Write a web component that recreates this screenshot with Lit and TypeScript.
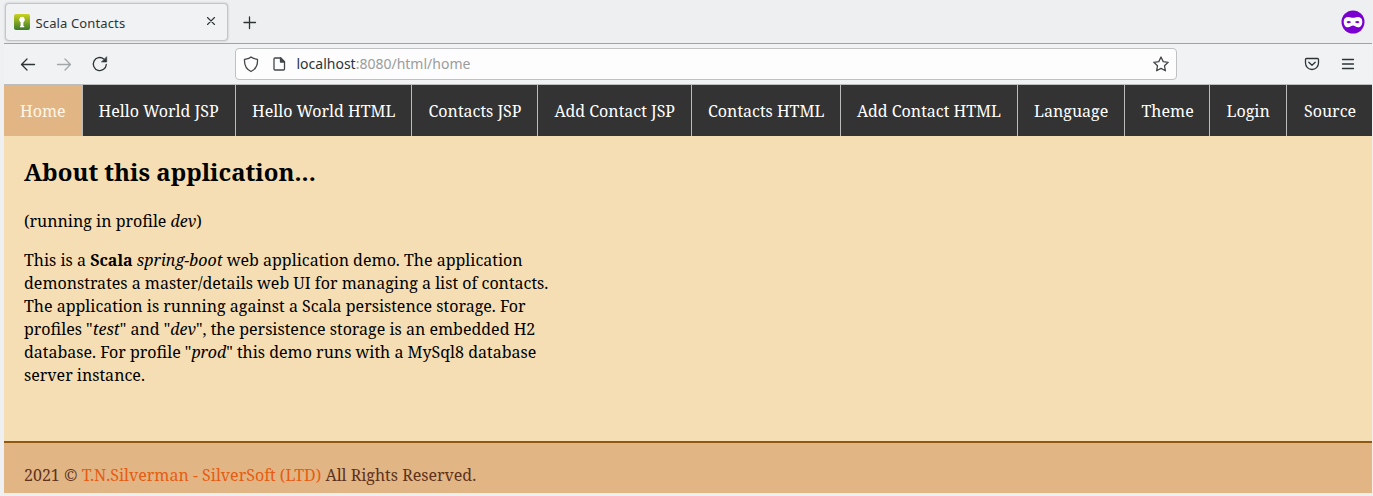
import { LitElement, html, css } from "lit";
import { customElement } from "lit/decorators.js";

const NAV: [string, number][] = [
  ["Home", 79],
  ["Hello World JSP", 153],
  ["Hello World HTML", 176],
  ["Contacts JSP", 126],
  ["Add Contact JSP", 154],
  ["Contacts HTML", 149],
  ["Add Contact HTML", 177],
  ["Language", 107],
  ["Theme", 85],
  ["Login", 77],
  ["Source", 85],
];

@customElement("browser-chrome")
class BrowserChrome extends LitElement {
  static styles = css`
    :host { display: block; font-family: "Noto Sans", sans-serif; color: #2e3436; }
    * { box-sizing: border-box; }
    svg { display: block; flex: none; overflow: visible; fill: none; stroke: #2e3436; stroke-width: 1.3; stroke-linecap: round; stroke-linejoin: round; }
    .tabs { height: 44px; display: flex; align-items: flex-start; padding: 3px 7px 0 1px; background: #eeeff1; border-bottom: 1px solid #a0a3a2; }
    .tab { width: 223px; height: 38px; display: flex; align-items: center; padding: 0 11px 0 8px; background: #f1f2f4; border: 1px solid #c3c5c6; border-radius: 4px; box-shadow: 0 0 2px #b0b2b4; font-size: 13px; }
    .tab .close { stroke-width: 1.1; margin-bottom: 2px; }
    .title { flex: 1; padding: 2px 0 0 5.500px; letter-spacing: .13px; white-space: nowrap; }
    .plus { margin: 14px 0 0 16px; }
    .mask { margin: 7px 0 0 auto; }
    .bar { height: 41px; display: flex; align-items: center; background: #f1f2f4; border-bottom: 1px solid #bcbebe; padding: 0 16px; }
    .dim { opacity: .4; }
    .nav-gap { margin-left: 20px; }
    .url { flex: none; width: 942px; height: 32px; margin-left: 127px; display: flex; align-items: center; background: #fdfdfd; border: 1px solid #bfc1c3; border-radius: 4px; padding: 0 7px; font-size: 14px; white-space: nowrap; }
    .url svg { stroke: #43474a; }
    .page-icon { margin-left: 12px; }
    .address { flex: 1; padding: 0 0 2px 9.500px; color: #9a9c9e; }
    .address b { font-weight: 400; color: #2e3436; }
    .pocket { margin-left: 127px; }
  `;
  render() {
    return html`
      <div class="tabs">
        <div class="tab">
          <svg width="16" height="16" viewBox="0 0 16 16">
            <defs><linearGradient id="g" x1="0" y1="0" x2="0" y2="1"><stop offset="0" stop-color="#cbd321"/><stop offset="1" stop-color="#38792b"/></linearGradient></defs>
            <rect width="16" height="16" rx="2" style="fill:url(#g);stroke:none"/>
            <path d="M8 2.800a2.900 2.900 0 0 0-1.400 5.400V12H6v1.200h4.200V12h-.8V8.200A2.900 2.900 0 0 0 8 2.800z" style="fill:#fff;stroke:none"/>
          </svg>
          <span class="title">Scala Contacts</span>
          <svg class="close" width="10" height="10" viewBox="0 0 10 10"><path d="M1.500 1.500L8.500 8.500M8.500 1.500L1.500 8.500"/></svg>
        </div>
        <svg class="plus" width="12" height="12" viewBox="0 0 12 12"><path d="M5.500 0v11.500M0 5.500h11.500"/></svg>
        <svg class="mask" width="24" height="24" viewBox="0 0 24 24">
          <circle cx="12" cy="12" r="11.500" style="fill:#7a00d0;stroke:none"/>
          <path fill-rule="evenodd" style="fill:#fff;stroke:none" d="M7.300 6.900c2.200 0 3.200.9 4.700.9s2.500-.9 4.700-.9c2.900 0 4.600 1.700 4.600 4.500 0 3.500-1.600 5.800-4.200 5.800-2.400 0-3.600-1.700-5.100-1.700s-2.700 1.700-5.100 1.700c-2.600 0-4.200-2.300-4.200-5.800 0-2.800 1.700-4.500 4.600-4.500zM5.500 12c1 1.600 3.500 1.700 4.600.1-1.300-1.500-3.400-1.600-4.600-.1zM13.900 12.100c1.100 1.600 3.600 1.500 4.600-.1-1.200-1.500-3.300-1.400-4.600.1z"/>
        </svg>
      </div>
      <div class="bar">
        <svg width="16" height="16" viewBox="0 0 16 16"><path d="M14.500 8.500H1.500M7 3L1.500 8.500 7 14"/></svg>
        <svg class="nav-gap dim" width="16" height="16" viewBox="0 0 16 16"><path d="M1.500 8.500h13M9 3l5.500 5.500L9 14"/></svg>
        <svg class="nav-gap" width="16" height="16" viewBox="0 0 16 16"><path d="M14.300 8.500A6.500 6.500 0 1 1 11.800 2.900"/><path d="M14.700 1v5H9.700z" style="fill:#2e3436;stroke-width:.6"/></svg>
        <div class="url">
          <svg width="16" height="16" viewBox="0 0 16 16"><path d="M8 1C6 2.800 3.500 3 1.500 3.500 1.200 9.500 3.500 13.500 8 15.500c4.500-2 6.800-6 6.500-12C12.500 3 10 2.800 8 1z"/></svg>
          <svg class="page-icon" width="16" height="16" viewBox="0 0 16 16"><path d="M4 2h5.800L13.500 5.700V13a1 1 0 0 1-1 1H4a1 1 0 0 1-1-1V3a1 1 0 0 1 1-1z"/><path d="M9.500 2v4h4z" style="fill:#43474a"/></svg>
          <span class="address"><b>localhost</b>:8080/html/home</span>
          <svg width="16" height="16" viewBox="0 0 16 16"><path d="M8 1l2.200 4.600 5 .7-3.700 3.500.9 5L8 12.400l-4.400 2.400.9-5L.8 6.300l5-.7z"/></svg>
        </div>
        <svg class="pocket" width="16" height="16" viewBox="0 0 16 16"><path d="M2.500 2.500h11a1 1 0 0 1 1 1V7a6.500 6.500 0 0 1-13 0V3.500a1 1 0 0 1 1-1z"/><path d="M4.800 6.200L8 9.200l3.200-3"/></svg>
        <svg class="nav-gap" width="16" height="16" viewBox="0 0 16 16"><path d="M2.500 3.500h11M2.500 8h11M2.500 12.500h11"/></svg>
      </div>`;
  }
}

@customElement("app-root")
class AppRoot extends LitElement {
  static styles = css`
    :host { display: block; width: 1373px; height: 496px; box-sizing: border-box; padding: 0 1px 3px 4px; background: #eff0f1; overflow: hidden; }
    * { box-sizing: border-box; }
    .page { height: 408px; display: flex; flex-direction: column; background: #f5deb3; font: 16px/23px "Noto Serif", "Droid Serif", "DejaVu Serif Condensed", "DejaVu Serif", serif; color: #000; }
    nav { display: flex; flex: none; height: 51px; background: #333; }
    .item { flex: none; border-right: 1px solid #bbb; padding: 15px 0 0 16px; color: #fff; white-space: nowrap; }
    .item:nth-child(2) { padding-left: 15.500px; }
    .item:nth-child(4), .item:nth-child(5), .item:nth-child(9), .item:nth-child(10) { padding-left: 16.500px; }
    .item:last-child { border-right: 0; padding-left: 17px; }
    .item.active { background: #e2b584; color: #fff6e6; }
    main { flex: 1; padding: 19px 20px; }
    h2 { margin: 0; font-size: 24px; line-height: 33px; }
    p { margin: 22px 0 0; white-space: nowrap; }
    .about { margin-top: 16px; }
    footer { height: 52px; border-top: 2px solid #905810; background: #e2b584; padding: 21px 20px 0; color: #5f321c; white-space: nowrap; }
    .link { color: #e65c12; }
  `;
  render() {
    return html`
      <browser-chrome></browser-chrome>
      <div class="page">
        <nav>${NAV.map(([label, width], i) => html`<div class="item ${i === 0 ? "active" : ""}" style="width:${width}px">${label}</div>`)}</nav>
        <main>
          <h2>About this application...</h2>
          <p>(running in profile <em>dev</em>)</p>
          <p class="about">This is a <b>Scala</b> <em>spring-boot</em> web application demo. The application<br>demonstrates a master/details web UI for managing a list of contacts.<br>The application is running against a Scala persistence storage. For<br>profiles "<em>test</em>" and "<em>dev</em>", the persistence storage is an embedded H2<br>database. For profile "<em>prod</em>" this demo runs with a MySql8 database<br>server instance.</p>
        </main>
        <footer>2021 © <span class="link">T.N.Silverman - SilverSoft (LTD)</span> All Rights Reserved.</footer>
      </div>`;
  }
}
